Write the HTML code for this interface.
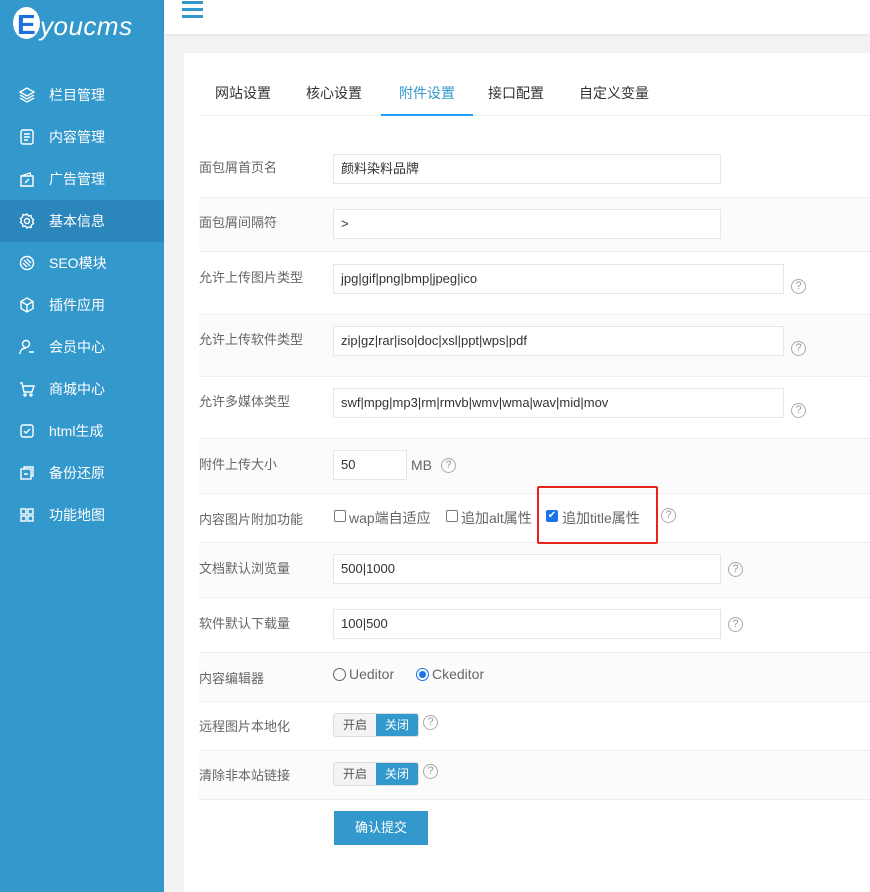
<!DOCTYPE html><html><head><meta charset="utf-8"><style>
*{box-sizing:border-box;margin:0;padding:0}
body{width:870px;height:892px;overflow:hidden;background:#f3f3f3;font-family:"Liberation Sans","Noto Sans CJK SC",sans-serif;font-size:13px;color:#666;position:relative}
.side{position:absolute;left:0;top:0;width:164px;height:892px;background:#3398cc}
.logo{position:absolute;left:13px;top:7px;width:27px;height:32px;border-radius:50%;background:#fff}
.logo b{position:absolute;left:4px;top:2px;font:bold 28px "Liberation Sans",sans-serif;color:#1f6fe0}
.logot{position:absolute;left:40px;top:11px;color:#fff;font:italic 26px "Liberation Sans",sans-serif;letter-spacing:0.5px}
.mi{position:absolute;left:0;width:164px;height:42px;color:#fff;font-size:14px;line-height:42px;padding-left:49px}
.mi.act{background:#2a86bb}
.mi svg{position:absolute;left:19px;top:13px}
.top{position:absolute;left:164px;top:0;width:706px;height:34px;background:#fff;box-shadow:0 1px 4px rgba(0,0,0,.08)}
.ham{position:absolute;left:182px;top:1px;width:21px}
.ham i{display:block;height:3px;background:#3398cc;margin-bottom:4px}
.card{position:absolute;left:184px;top:53px;width:686px;height:839px;background:#fff}
.tabs{position:absolute;left:199px;top:72px;width:671px;height:44px;border-bottom:1px solid #eee}
.tab{position:absolute;top:0;height:44px;line-height:42px;font-size:14px;color:#333}
.tab.act{color:#3398cc;border-bottom:2px solid #1e9fff}
.row{position:absolute;left:199px;width:671px;border-bottom:1px solid #eee}
.row.g{background:#fbfbfb}
.lbl{position:absolute;left:199px;font-size:13px;color:#666}
.inp{position:absolute;border:1px solid #e6e6e6;background:#fff;height:30px;line-height:28px;padding-left:7px;color:#333;font-size:13px}
.q{position:absolute;width:15px;height:15px;border:1px solid #aaa;border-radius:50%;font-size:11px;line-height:13px;text-align:center;color:#999}
.cb{position:absolute;width:12px;height:12px;border:1px solid #777;border-radius:2px}
.sw{position:absolute;left:333px;width:86px;height:24px;border:1px solid #ddd;border-radius:3px;overflow:hidden;font-size:12px}
.sw span{float:left;width:42px;height:22px;line-height:22px;text-align:center;background:#f3f3f3;color:#555}
.sw span+span{width:42px;background:#3398cc;color:#fff}
</style></head><body>
<div class="side">
<div class="logo"><b>E</b></div><div class="logot">youcms</div>
<div class="mi" style="top:74px"><svg width="16" height="16" viewBox="0 0 16 16" fill="none" stroke="#fff" stroke-width="1.4"><path d="M8 1L1 5l7 4 7-4z M1 8l7 4 7-4 M1 11l7 4 7-4"/></svg>栏目管理</div>
<div class="mi" style="top:116px"><svg width="16" height="16" viewBox="0 0 16 16" fill="none" stroke="#fff" stroke-width="1.4"><rect x="2" y="1" width="12" height="14" rx="2"/><path d="M5 5h6M5 8h6M5 11h4"/></svg>内容管理</div>
<div class="mi" style="top:158px"><svg width="16" height="16" viewBox="0 0 16 16" fill="none" stroke="#fff" stroke-width="1.4"><path d="M2 5h12v10H2z M2 5l9-3 1 3 M6 12l4-4"/></svg>广告管理</div>
<div class="mi act" style="top:200px"><svg width="16" height="16" viewBox="0 0 16 16" fill="none" stroke="#fff" stroke-width="1.4"><circle cx="8" cy="8" r="2.5"/><path d="M8 1l1.5 2 2.5-.5.5 2.5 2 1.5-1 2 1 2-2 1.5-.5 2.5-2.5-.5L8 15l-1.5-2-2.5.5-.5-2.5-2-1.5 1-2-1-2 2-1.5.5-2.5 2.5.5z"/></svg>基本信息</div>
<div class="mi" style="top:242px"><svg width="16" height="16" viewBox="0 0 16 16" fill="none" stroke="#fff" stroke-width="1.4"><circle cx="8" cy="8" r="6.5"/><path d="M5 5l6 6M8 4l4 4M4 8l4 4"/></svg>SEO模块</div>
<div class="mi" style="top:284px"><svg width="16" height="16" viewBox="0 0 16 16" fill="none" stroke="#fff" stroke-width="1.4"><path d="M8 1l6 3.5v7L8 15l-6-3.5v-7z M2 4.5L8 8l6-3.5 M8 8v7"/></svg>插件应用</div>
<div class="mi" style="top:326px"><svg width="16" height="16" viewBox="0 0 16 16" fill="none" stroke="#fff" stroke-width="1.4"><circle cx="7" cy="5" r="3.5"/><path d="M1 15c0-4 3-6 6-6 M10 13h5"/></svg>会员中心</div>
<div class="mi" style="top:368px"><svg width="16" height="16" viewBox="0 0 16 16" fill="none" stroke="#fff" stroke-width="1.4"><path d="M1 2h2l2 9h8l2-6H4"/><circle cx="6" cy="14" r="1"/><circle cx="12" cy="14" r="1"/></svg>商城中心</div>
<div class="mi" style="top:410px"><svg width="16" height="16" viewBox="0 0 16 16" fill="none" stroke="#fff" stroke-width="1.4"><rect x="2" y="2" width="12" height="12" rx="2"/><path d="M5 8l2 2 4-4"/></svg>html生成</div>
<div class="mi" style="top:452px"><svg width="16" height="16" viewBox="0 0 16 16" fill="none" stroke="#fff" stroke-width="1.4"><rect x="2" y="4" width="10" height="10"/><path d="M5 4V2h9v9h-2 M5 9h4"/></svg>备份还原</div>
<div class="mi" style="top:494px"><svg width="16" height="16" viewBox="0 0 16 16" fill="none" stroke="#fff" stroke-width="1.4"><rect x="2" y="2" width="5" height="5"/><rect x="9" y="2" width="5" height="5"/><rect x="2" y="9" width="5" height="5"/><rect x="9" y="9" width="5" height="5"/></svg>功能地图</div>
</div>
<div class="top"></div>
<div class="ham"><i></i><i></i><i></i></div>
<div class="card"></div>
<div class="tabs">
<div class="tab" style="left:16px">网站设置</div>
<div class="tab" style="left:107px">核心设置</div>
<div class="tab act" style="left:182px;width:92px;text-align:center">附件设置</div>
<div class="tab" style="left:289px">接口配置</div>
<div class="tab" style="left:380px">自定义变量</div>
</div>

<div class="row" style="top:142px;height:56px"></div>
<div class="row g" style="top:198px;height:54px"></div>
<div class="row" style="top:253px;height:62px"></div>
<div class="row g" style="top:315px;height:62px"></div>
<div class="row" style="top:377px;height:62px"></div>
<div class="row g" style="top:439px;height:55px"></div>
<div class="row" style="top:494px;height:49px"></div>
<div class="row g" style="top:543px;height:55px"></div>
<div class="row" style="top:598px;height:55px"></div>
<div class="row g" style="top:653px;height:49px"></div>
<div class="row" style="top:702px;height:49px"></div>
<div class="row g" style="top:751px;height:49px"></div>

<div class="lbl" style="top:157px">面包屑首页名</div>
<div class="inp" style="left:333px;top:154px;width:388px">颜料染料品牌</div>
<div class="lbl" style="top:212px">面包屑间隔符</div>
<div class="inp" style="left:333px;top:209px;width:388px">&gt;</div>
<div class="lbl" style="top:267px">允许上传图片类型</div>
<div class="inp" style="left:333px;top:264px;width:451px">jpg|gif|png|bmp|jpeg|ico</div><div class="q" style="left:791px;top:279px">?</div>
<div class="lbl" style="top:329px">允许上传软件类型</div>
<div class="inp" style="left:333px;top:326px;width:451px">zip|gz|rar|iso|doc|xsl|ppt|wps|pdf</div><div class="q" style="left:791px;top:341px">?</div>
<div class="lbl" style="top:391px">允许多媒体类型</div>
<div class="inp" style="left:333px;top:388px;width:451px">swf|mpg|mp3|rm|rmvb|wmv|wma|wav|mid|mov</div><div class="q" style="left:791px;top:403px">?</div>
<div class="lbl" style="top:454px">附件上传大小</div>
<div class="inp" style="left:333px;top:450px;width:74px">50</div>
<div style="position:absolute;left:411px;top:457px;font-size:14px">MB</div><div class="q" style="left:441px;top:458px">?</div>
<div class="lbl" style="top:509px">内容图片附加功能</div>
<div class="cb" style="left:334px;top:510px"></div><div style="position:absolute;left:349px;top:508px;font-size:14px">wap端自适应</div>
<div class="cb" style="left:446px;top:510px"></div><div style="position:absolute;left:461px;top:508px;font-size:14px">追加alt属性</div>
<div class="cb" style="left:546px;top:510px;background:#1a73e8;border-color:#1a73e8;color:#fff;font-size:10px;line-height:10px;text-align:center">✔</div><div style="position:absolute;left:562px;top:508px;font-size:14px">追加title属性</div>
<div class="q" style="left:661px;top:508px">?</div>
<div style="position:absolute;left:537px;top:486px;width:121px;height:58px;border:2px solid #e8231d;border-radius:2px"></div>
<div class="lbl" style="top:558px">文档默认浏览量</div>
<div class="inp" style="left:333px;top:554px;width:388px">500|1000</div><div class="q" style="left:728px;top:562px">?</div>
<div class="lbl" style="top:613px">软件默认下载量</div>
<div class="inp" style="left:333px;top:609px;width:388px">100|500</div><div class="q" style="left:728px;top:617px">?</div>
<div class="lbl" style="top:668px">内容编辑器</div>
<div style="position:absolute;left:333px;top:668px;width:13px;height:13px;border:1px solid #666;border-radius:50%"></div>
<div style="position:absolute;left:349px;top:666px;font-size:14px">Ueditor</div>
<div style="position:absolute;left:416px;top:668px;width:13px;height:13px;border:1px solid #1a73e8;border-radius:50%;padding:2px"><div style="width:7px;height:7px;background:#1a73e8;border-radius:50%"></div></div>
<div style="position:absolute;left:432px;top:666px;font-size:14px">Ckeditor</div>
<div class="lbl" style="top:716px">远程图片本地化</div>
<div class="sw" style="top:713px"><span>开启</span><span>关闭</span></div><div class="q" style="left:423px;top:715px">?</div>
<div class="lbl" style="top:765px">清除非本站链接</div>
<div class="sw" style="top:762px"><span>开启</span><span>关闭</span></div><div class="q" style="left:423px;top:764px">?</div>
<div style="position:absolute;left:334px;top:811px;width:94px;height:34px;background:#3398cc;color:#fff;text-align:center;line-height:34px;font-size:13px">确认提交</div>
</body></html>
